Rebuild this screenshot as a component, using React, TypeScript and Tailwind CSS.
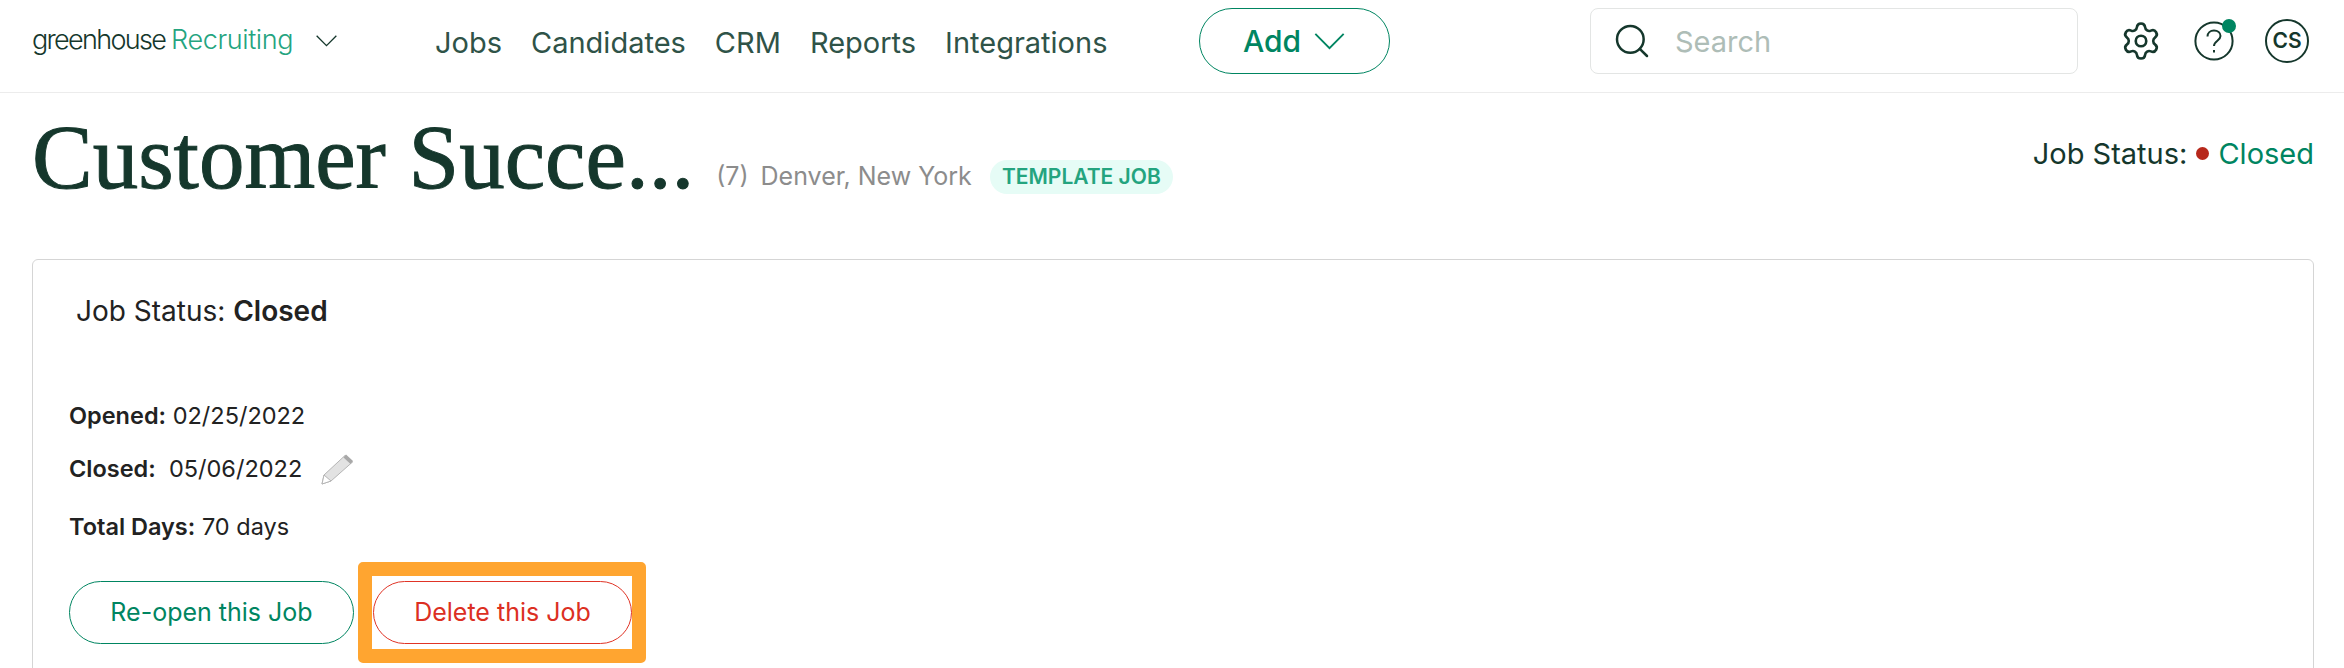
import { Search, Settings } from "lucide-react";

const sans = "font-['Inter',sans-serif]";

function Chevron({ className }: { className: string }) {
  return (
    <svg aria-hidden viewBox="0 0 32 18" fill="none" stroke="currentColor" strokeWidth="2" className={className}>
      <path d="M1 1l15 15L31 1" />
    </svg>
  );
}

function HelpIcon() {
  return (
    <div className="relative h-[40px] w-[40px] text-[#15372c]">
      <svg aria-hidden viewBox="0 0 40 40" fill="none" stroke="currentColor" strokeWidth="2" className="h-full w-full">
        <circle cx="20" cy="20" r="18.6" />
        <path d="M13.5 15.5c0-3.6 2.8-6 6.5-6s6.5 2.3 6.5 5.6c0 4.7-6.5 4.7-6.5 10" />
        <path d="M20 29v2.5" />
      </svg>
      {/* Green notification dot */}
      <span className="absolute -top-[2px] -right-[2px] h-[14px] w-[14px] rounded-full bg-[#008561]" />
    </div>
  );
}

function Pencil() {
  return (
    <svg aria-hidden viewBox="0 0 33 32" className="h-[32px] w-[33px]">
      <path d="M1 31l2-9L24 2.5l7.5 6.5L10 28z" fill="#e2e2e2" stroke="#b5b5b5" strokeWidth="1" />
      <path d="M25 1.5l7 6.5-2.5 3-7-6.5z" fill="#a8a8a8" />
      <path d="M1 31l2-9 7 6z" fill="#fff" stroke="#b5b5b5" strokeWidth="1" />
    </svg>
  );
}

function Navbar() {
  return (
    <nav className="flex h-[93px] items-center border-b border-[#ececec] pb-[10px] pl-[32px] text-[#15372c]">
      <div className="flex w-[403px] items-center">
        <div className="flex items-baseline gap-[6px] pb-[3px] text-[27px] leading-none font-light">
          <span className="tracking-[-1.7px]">greenhouse</span>
          <span className="tracking-[-0.4px] text-[#24a47f]">Recruiting</span>
        </div>
        <Chevron className="ml-[23px] h-[12px] w-[21px] text-[#15372c]" />
      </div>
      <div className="flex w-[764px] gap-[29px] pt-[2px] text-[29px] leading-none text-[#2f5348]">
        <span>Jobs</span>
        <span>Candidates</span>
        <span>CRM</span>
        <span>Reports</span>
        <span>Integrations</span>
      </div>
      <button className="flex h-[66px] w-[191px] items-center justify-center gap-[12px] rounded-full border border-[#008561] text-[30px] font-medium text-[#008561]">
        Add
        <Chevron className="h-[17px] w-[33px]" />
      </button>
      <div className="ml-[200px] flex h-[66px] w-[488px] items-center rounded-[8px] border border-[#e3e5e4] pl-[21px]">
        <Search size={40} strokeWidth={1.5} className="text-[#15372c]" />
        <span className="mt-[2px] ml-[23px] text-[29px] text-[#aebdb7]">Search</span>
      </div>
      <Settings size={42} strokeWidth={1.5} className="ml-[42px]" />
      <div className="ml-[32px]">
        <HelpIcon />
      </div>
      <div className="ml-[31px] flex h-[44px] w-[44px] items-center justify-center rounded-full border-2 border-[#15372c] text-[21px] font-semibold">
        CS
      </div>
    </nav>
  );
}

function Detail({ label, children }: { label: string; children: React.ReactNode }) {
  return (
    <p className="text-[23.5px] leading-[30px] text-[#222222]">
      <span className="font-semibold">{label}</span> {children}
    </p>
  );
}

export default function App() {
  return (
    <div className={`${sans} h-[668px] w-[2344px] overflow-hidden bg-white`}>
      <Navbar />
      <header className="flex h-[166px] items-start justify-between pr-[30px] pl-[32px]">
        <div className="flex items-center pt-[10px]">
          <h1 className="font-['Liberation_Serif',serif] text-[91px] leading-[110px] text-[#15372c] [-webkit-text-stroke:1px_#15372c]">
            Customer Succe...
          </h1>
          <span className="mt-[38px] ml-[22px] text-[25px] text-[#8c8c8c]">(7)</span>
          <span className="mt-[38px] ml-[12px] text-[25px] text-[#8c8c8c]">Denver, New York</span>
          <span className="mt-[38px] ml-[18px] flex h-[34px] w-[183px] items-center justify-center rounded-full bg-[#e6fcf6] text-[21px] font-semibold text-[#24a47f]">
            TEMPLATE JOB
          </span>
        </div>
        <div className="flex items-center pt-[39px] text-[29px] text-[#15372c]">
          Job Status:
          <span className="mr-[9px] ml-[9px] h-[13px] w-[13px] rounded-full bg-[#b7281b]" />
          <span className="text-[#008561]">Closed</span>
        </div>
      </header>
      <section className="mr-[30px] ml-[32px] h-[500px] rounded-t-[6px] border border-[#d5d5d5] pl-[36px]">
        <h2 className="mt-[34px] ml-[7px] text-[28px] leading-[34px] text-[#222222]">
          Job Status: <strong className="font-semibold">Closed</strong>
        </h2>
        <div className="mt-[73px]">
          <Detail label="Opened:">02/25/2022</Detail>
        </div>
        <div className="mt-[22px] flex items-center gap-[19px]">
          <Detail label="Closed:">&nbsp;05/06/2022</Detail>
          <Pencil />
        </div>
        <div className="mt-[27px]">
          <Detail label="Total Days:">70 days</Detail>
        </div>
        <div className="mt-[20px] flex items-center gap-[4px] text-[25px]">
          <button className="h-[63px] w-[285px] rounded-full border border-[#008561] text-[#008561]">Re-open this Job</button>
          {/* Orange highlight drawn on the screenshot */}
          <div className="flex h-[101px] w-[288px] items-center justify-end rounded-[5px] border-[14px] border-[#ffa530]">
            <button className="h-[63px] w-[259px] rounded-full border border-[#e03426] text-[#dc2f22]">Delete this Job</button>
          </div>
        </div>
      </section>
    </div>
  );
}
